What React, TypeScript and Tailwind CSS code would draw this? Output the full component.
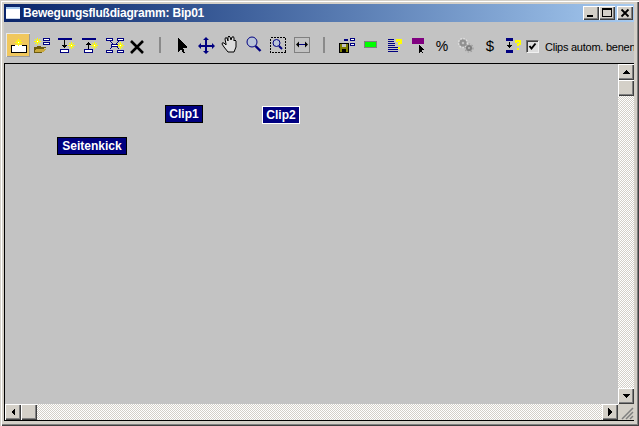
import React from 'react'

const NAVY = '#000080'

// toolbar glyphs use screen coordinates, every icon is a 24px slot starting at x
const Ico = ({ x, children }: { x: number; children: React.ReactNode }) => (
  <svg className="w-6 h-6 shrink-0" viewBox={`${x} 33 24 24`} shapeRendering="crispEdges">
    {children}
  </svg>
)

const R = ({ x, y, w, h, c = '#000' }: { x: number; y: number; w: number; h: number; c?: string }) => (
  <rect x={x} y={y} width={w} height={h} fill={c} />
)

// little spiky star used on the "new" icons
const Spark = ({ x, y }: { x: number; y: number }) => (
  <g>
    <R x={x} y={y - 3} w={1} h={7} c="#ffff00" />
    <R x={x - 3} y={y} w={7} h={1} c="#ffff00" />
    <R x={x - 1} y={y - 1} w={3} h={3} c="#ffff00" />
    <R x={x - 2} y={y - 2} w={1} h={1} c="#ffff00" />
    <R x={x + 2} y={y - 2} w={1} h={1} c="#ffff00" />
    <R x={x - 2} y={y + 2} w={1} h={1} c="#ffff00" />
    <R x={x + 2} y={y + 2} w={1} h={1} c="#ffff00" />
    <R x={x} y={y} w={1} h={1} c="#ffffff" />
  </g>
)

const Box = ({ x, y, w, h }: { x: number; y: number; w: number; h: number }) => (
  <rect x={x + 0.5} y={y + 0.5} width={w - 1} height={h - 1} fill="#fff" stroke={NAVY} />
)

const Question = ({ x, y }: { x: number; y: number }) => (
  <g>
    <path d={`M${x + 1} ${y + 3}v-2h4v3h-2v2`} fill="none" stroke="#ffff00" strokeWidth={2} />
    <R x={x + 2} y={y + 8} w={2} h={2} c="#ffff00" />
  </g>
)

const Separator = () => <div className="w-[2px] h-4 shrink-0 bg-[#8a8a8a] mx-[9px] mt-[4px] self-start" />

const Toolbar = () => (
  <div className="h-[41px] bg-[#c3c3c3] flex items-start pt-[11px] pl-[2px] shrink-0 overflow-hidden">
    <div className="w-6 h-6 shrink-0 bg-[#f0c75e] shadow-[inset_1px_1px_0_#e8e8e8,inset_-1px_-1px_0_#9a9a9a]">
      <svg className="w-6 h-6" viewBox="6 33 24 24" shapeRendering="crispEdges">
        <R x={11} y={45} w={16} h={8} />
        <R x={12} y={46} w={14} h={6} c="#fff" />
        <R x={15} y={45} w={7} h={1} c="#fff" />
        <Spark x={18} y={42} />
      </svg>
    </div>
    <Ico x={30}>
      <path d="M34 47h3v-1h4v1h5v1h-2l-2 5H34z" fill="#6b5a10" />
      <path d="M36 49h10l-2 3H35z" fill="#c9a93c" />
      <Spark x={37} y={41} />
      <Box x={43} y={38} w={7} h={3} />
      <Box x={43} y={42} w={7} h={3} />
    </Ico>
    <Ico x={54}>
      <R x={58} y={38} w={14} h={2} c={NAVY} />
      <R x={64} y={40} w={1} h={7} />
      <path d="M62 45h5l-2.500 3z" fill="#000" />
      <Box x={60} y={49} w={9} h={4} />
      <Spark x={71} y={45} />
    </Ico>
    <Ico x={78}>
      <R x={82} y={38} w={14} h={2} c={NAVY} />
      <R x={88} y={43} w={1} h={6} />
      <path d="M86 45h5l-2.500-3z" fill="#000" />
      <Box x={84} y={49} w={9} h={4} />
      <Spark x={94} y={45} />
    </Ico>
    <Ico x={102}>
      <path d="M110 41l4 4-4 4M119 41l-4 4 4 4" stroke={NAVY} fill="none" shapeRendering="auto" />
      <Box x={106} y={38} w={7} h={3} />
      <Box x={117} y={38} w={7} h={3} />
      <Box x={106} y={50} w={7} h={3} />
      <Box x={117} y={50} w={7} h={3} />
      <Box x={111} y={44} w={7} h={3} />
      <Spark x={120} y={45} />
    </Ico>
    <Ico x={126}>
      <path d="M131 41l12 12M143 41l-12 12" stroke="#000" strokeWidth={2.6} shapeRendering="auto" />
    </Ico>
    <Separator />
    <Ico x={170}>
      <path d="M178 38v14l3-3 2 4h2l-2-5h4v-1z" fill="#000" />
    </Ico>
    <Ico x={194}>
      <g fill={NAVY}>
        <R x={205} y={39} w={2} h={13} c={NAVY} />
        <R x={200} y={45} w={13} h={2} c={NAVY} />
        <path d="M206 37l3 3h-6zM206 54l-3-3h6zM198 46l3-3v6zM215 46l-3 3v-6z" shapeRendering="auto" />
      </g>
    </Ico>
    <Ico x={218}>
      <path
        d="M228 52l-4-5-2-3q0-2 2-1l2 2v-1l-1-5q0-2 2-1l1 3v-4q1-2 2 0l1 3 1-3q2-1 2 1v3q1-2 2 0v6l-2 5z"
        fill="#dcdcdc"
        stroke="#000"
        shapeRendering="auto"
      />
    </Ico>
    <Ico x={242}>
      <circle cx={252} cy={42} r={5} fill="#b9c4d8" stroke={NAVY} shapeRendering="auto" />
      <path d="M255.500 46l5 5" stroke={NAVY} strokeWidth={2.4} shapeRendering="auto" />
    </Ico>
    <Ico x={266}>
      <rect x={270.5} y={37.500} width={15} height={15} fill="none" stroke="#000" strokeDasharray="2 1" />
      <circle cx={276.500} cy={43} r={3.5} fill="#b9c4d8" stroke={NAVY} shapeRendering="auto" />
      <path d="M279 46l3 3" stroke={NAVY} strokeWidth={2} shapeRendering="auto" />
    </Ico>
    <Ico x={290}>
      <rect x={294.5} y={37.500} width={15} height={15} fill="none" stroke="#808080" />
      <R x={298} y={44} w={8} h={1} c={NAVY} />
      <path d="M296 44.500l3-3v6zM308 44.500l-3-3v6z" fill="#000" shapeRendering="auto" />
    </Ico>
    <Separator />
    <Ico x={334}>
      <R x={339} y={43} w={10} h={10} c="#000" />
      <R x={340} y={44} w={8} h={8} c="#808000" />
      <R x={342} y={44} w={4} h={3} c="#c3c3c3" />
      <R x={342} y={49} w={4} h={3} c="#000" />
      <Box x={344} y={39} w={4} h={2} />
      <Box x={350} y={38} w={5} h={3} />
      <Box x={350} y={43} w={5} h={3} />
    </Ico>
    <Ico x={358}>
      <R x={364} y={41} w={13} h={7} c="#808080" />
      <R x={365} y={42} w={11} h={5} c="#00ff00" />
    </Ico>
    <Ico x={382}>
      <R x={388} y={39} w={6} h={1} c={NAVY} />
      <R x={388} y={41} w={6} h={1} c={NAVY} />
      <R x={388} y={43} w={7} h={1} c={NAVY} />
      <R x={388} y={45} w={7} h={1} c={NAVY} />
      <R x={388} y={47} w={10} h={1} c={NAVY} />
      <R x={388} y={49} w={10} h={1} c={NAVY} />
      <R x={388} y={51} w={10} h={1} c={NAVY} />
      <Question x={396} y={39} />
    </Ico>
    <Ico x={406}>
      <R x={412} y={38} w={12} h={6} c="#800080" />
      <path d="M419 45v8l2-2 1 2h1l-1-3h2z" fill="#000" />
    </Ico>
    <div className="w-6 h-6 shrink-0 flex items-center justify-center text-[14px] leading-none text-black font-['Liberation_Sans',sans-serif] pt-[1px]">%</div>
    <Ico x={454}>
      <g shapeRendering="auto" fill="none">
        <circle cx={463} cy={43} r={2.5} strokeWidth={2.4} stroke="#909090" />
        <circle cx={463} cy={43} r={4.5} strokeWidth={1.4} strokeDasharray="1.500 1.500" stroke="#e0e0e0" />
        <circle cx={469} cy={48} r={2} strokeWidth={2.2} stroke="#808080" />
        <circle cx={469} cy={48} r={4} strokeWidth={1.2} strokeDasharray="1.500 1.500" stroke="#9a9a9a" />
      </g>
    </Ico>
    <div className="w-6 h-6 shrink-0 flex items-center justify-center text-[15px] leading-none text-black font-['Liberation_Sans',sans-serif]">$</div>
    <Ico x={502}>
      <R x={506} y={38} w={7} h={3} c={NAVY} />
      <R x={506} y={50} w={7} h={3} c={NAVY} />
      <R x={509} y={42} w={1} h={6} />
      <path d="M507 45h5l-2.500 3z" fill="#000" />
      <Question x={515} y={40} />
    </Ico>
    <div className="w-[13px] h-[13px] mt-[7px] shrink-0 bg-[#dedede] border border-t-[#707070] border-l-[#707070] border-r-[#f0f0f0] border-b-[#f0f0f0] shadow-[inset_1px_1px_0_#404040]">
      <svg className="w-[11px] h-[11px]" viewBox="0 0 11 11">
        <path d="M2.500 5l2 2.500L8.500 2.500" fill="none" stroke="#000" strokeWidth={2} />
      </svg>
    </div>
    <span className="ml-[6px] mt-[7px] text-[11px] tracking-[-0.25px] leading-[14px] text-black whitespace-nowrap font-['Liberation_Sans',sans-serif]">
      Clips autom. benen
    </span>
  </div>
)

const bevel = 'bg-[#d4d0c8] shadow-[inset_1px_1px_0_#fff,inset_-1px_-1px_0_#404040,inset_-2px_-2px_0_#808080]'
const track = 'bg-[conic-gradient(#d4d0c8_25%,#fff_0_50%,#d4d0c8_0_75%,#fff_0)] bg-[length:2px_2px]'

const ScrollBtn = ({ points, className = '' }: { points?: string; className?: string }) => (
  <div className={`w-4 h-4 shrink-0 ${bevel} ${className}`}>
    {points && (
      <svg className="w-4 h-4" viewBox="0 0 16 16" shapeRendering="crispEdges">
        <polygon points={points} fill="#000" />
      </svg>
    )}
  </div>
)

const TitleBtn = ({ children, className = '' }: { children: React.ReactNode; className?: string }) => (
  <div className={`w-4 h-[14px] ${bevel} ${className}`}>
    <svg className="w-4 h-[14px]" viewBox="0 0 16 14" shapeRendering="crispEdges">
      {children}
    </svg>
  </div>
)

const Node = ({ label, className }: { label: string; className: string }) => (
  <div className={`absolute h-[18px] flex items-center justify-center bg-[#000080] border text-white text-[12px] font-bold font-['Liberation_Sans',sans-serif] ${className}`}>
    {label}
  </div>
)

export default function App() {
  return (
    <div className="w-[639px] h-[426px] flex flex-col bg-[#d4d0c8] pt-[4px] pl-[4px] pr-[5px] pb-[5px] overflow-hidden shadow-[inset_1px_1px_0_#d4d0c8,inset_2px_2px_0_#fff,inset_-1px_-1px_0_#404040,inset_-2px_-2px_0_#808080]">
      {/* title bar */}
      <div className="h-[18px] shrink-0 flex items-center bg-gradient-to-r from-[#0a246a] to-[#a6caf0] pl-[2px] pr-[1px]">
        <svg className="w-[14px] h-3 shrink-0" viewBox="0 0 14 12" shapeRendering="crispEdges">
          <rect width="14" height="12" fill="#fff" />
          <rect width="14" height="2" fill="#a6caf0" />
          <rect x="0" y="11" width="14" height="1" fill="#c8d4e8" />
        </svg>
        <span className="ml-[3px] text-[12px] leading-none font-bold text-white whitespace-nowrap tracking-[-0.2px] font-['Liberation_Sans',sans-serif]">
          Bewegungsflußdiagramm: Bip01
        </span>
        <div className="ml-auto flex items-center">
          <TitleBtn>
            <rect x="4" y="9" width="6" height="2" fill="#000" />
          </TitleBtn>
          <TitleBtn>
            <path d="M3 2h10v9H3zM4 4v6h8V4z" fill="#000" fillRule="evenodd" />
          </TitleBtn>
          <TitleBtn className="ml-[2px]">
            <path d="M4.500 3.500l7 7M11.500 3.500l-7 7" stroke="#000" strokeWidth={1.800} shapeRendering="auto" />
          </TitleBtn>
        </div>
      </div>

      <Toolbar />

      <div className="flex-1 min-h-0 flex flex-col border border-black border-r-0">
        <div className="flex-1 min-h-0 flex">
          {/* diagram */}
          <div className="flex-1 relative bg-[#c3c3c3]">
            <Node label="Clip1" className="left-[160px] top-[41px] w-[38px] border-black" />
            <Node label="Clip2" className="left-[257px] top-[42px] w-[38px] border-white" />
            <Node label="Seitenkick" className="left-[52px] top-[73px] w-[70px] border-black" />
          </div>
          <div className={`w-4 flex flex-col ${track}`}>
            <ScrollBtn points="4,10 8,6 12,10" />
            <ScrollBtn />
            <div className="flex-1" />
            <ScrollBtn points="4,6 12,6 8,10" />
          </div>
        </div>
        <div className="h-4 shrink-0 flex">
          <div className={`flex-1 flex ${track}`}>
            <ScrollBtn points="10,4 10,12 6,8" />
            <ScrollBtn />
            <div className="flex-1" />
            <ScrollBtn points="6,4 10,8 6,12" />
          </div>
          <div className="w-4 bg-[#d4d0c8]">
            <svg className="w-4 h-4" viewBox="0 0 16 16">
              <path d="M15 4L4 15M15 8L8 15M15 12L12 15" stroke="#808080" strokeWidth={1.500} />
            </svg>
          </div>
        </div>
      </div>
    </div>
  )
}
